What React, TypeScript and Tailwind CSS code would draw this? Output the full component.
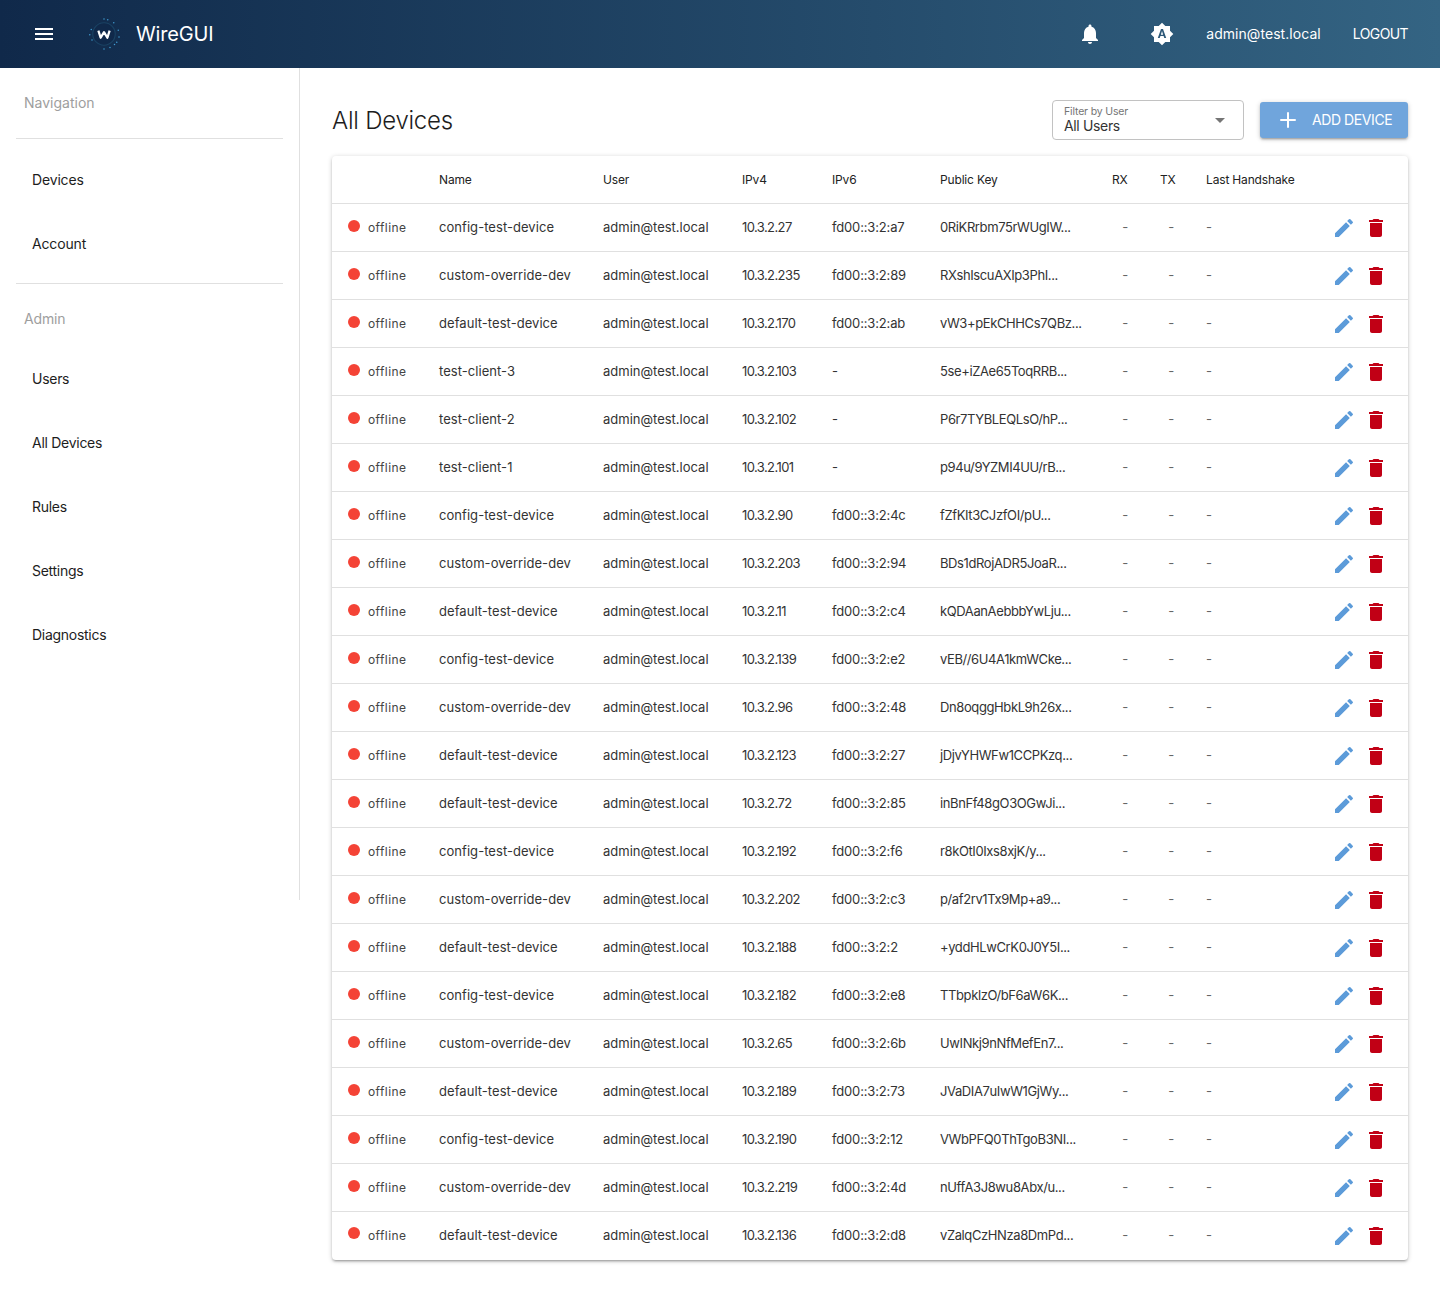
import { Plus } from "lucide-react";

const rows = [
  ["config-test-device", "10.3.2.27", "fd00::3:2:a7", "0RiKRrbm75rWUgIW..."],
  ["custom-override-dev", "10.3.2.235", "fd00::3:2:89", "RXshIscuAXIp3PhI..."],
  ["default-test-device", "10.3.2.170", "fd00::3:2:ab", "vW3+pEkCHHCs7QBz..."],
  ["test-client-3", "10.3.2.103", "-", "5se+iZAe65ToqRRB..."],
  ["test-client-2", "10.3.2.102", "-", "P6r7TYBLEQLsO/hP..."],
  ["test-client-1", "10.3.2.101", "-", "p94u/9YZMI4UU/rB..."],
  ["config-test-device", "10.3.2.90", "fd00::3:2:4c", "fZfKIt3CJzfOI/pU..."],
  ["custom-override-dev", "10.3.2.203", "fd00::3:2:94", "BDs1dRojADR5JoaR..."],
  ["default-test-device", "10.3.2.11", "fd00::3:2:c4", "kQDAanAebbbYwLju..."],
  ["config-test-device", "10.3.2.139", "fd00::3:2:e2", "vEB//6U4A1kmWCke..."],
  ["custom-override-dev", "10.3.2.96", "fd00::3:2:48", "Dn8oqggHbkL9h26x..."],
  ["default-test-device", "10.3.2.123", "fd00::3:2:27", "jDjvYHWFw1CCPKzq..."],
  ["default-test-device", "10.3.2.72", "fd00::3:2:85", "inBnFf48gO3OGwJi..."],
  ["config-test-device", "10.3.2.192", "fd00::3:2:f6", "r8kOtI0Ixs8xjK/y..."],
  ["custom-override-dev", "10.3.2.202", "fd00::3:2:c3", "p/af2rv1Tx9Mp+a9..."],
  ["default-test-device", "10.3.2.188", "fd00::3:2:2", "+yddHLwCrK0J0Y5I..."],
  ["config-test-device", "10.3.2.182", "fd00::3:2:e8", "TTbpklzO/bF6aW6K..."],
  ["custom-override-dev", "10.3.2.65", "fd00::3:2:6b", "UwINkj9nNfMefEn7..."],
  ["default-test-device", "10.3.2.189", "fd00::3:2:73", "JVaDIA7uIwW1GjWy..."],
  ["config-test-device", "10.3.2.190", "fd00::3:2:12", "VWbPFQ0ThTgoB3NI..."],
  ["custom-override-dev", "10.3.2.219", "fd00::3:2:4d", "nUffA3J8wu8Abx/u..."],
  ["default-test-device", "10.3.2.136", "fd00::3:2:d8", "vZalqCzHNza8DmPd..."],
];

const navTop = ["Devices", "Account"];
const navAdmin = ["Users", "All Devices", "Rules", "Settings", "Diagnostics"];

function Logo() {
  const dots = [
    [24, 4], [29, 5], [37, 9], [43, 19], [44, 28], [41, 35], [38, 38], [32, 42], [24, 44], [7, 18], [5, 25], [8, 32],
  ];
  return (
    <svg width="36" height="36" viewBox="0 0 48 48" className="shrink-0">
      <circle cx="24" cy="24" r="15" fill="#10294a" stroke="#1a4263" strokeWidth="1.5" />
      {dots.map(([x, y], i) => (
        <circle key={i} cx={x} cy={y} r="1" fill="#3f9bd1" />
      ))}
      <path d="M16.5 19.5l3 9.5 4.5-7.5 4.5 7.5 3-9.5" fill="none" stroke="#fff" strokeWidth="3" strokeLinejoin="round" />
    </svg>
  );
}

function MenuIcon() {
  return (
    <svg width="24" height="24" viewBox="0 0 24 24" fill="#fff">
      <path d="M3 18h18v-2H3v2zm0-5h18v-2H3v2zm0-7v2h18V6H3z" />
    </svg>
  );
}

function BellIcon() {
  return (
    <svg width="24" height="24" viewBox="0 0 24 24" fill="#fff">
      <path d="M12 22c1.1 0 2-.9 2-2h-4c0 1.1.89 2 2 2zm6-6v-5c0-3.07-1.64-5.64-4.5-6.32V4c0-.83-.67-1.5-1.5-1.5s-1.5.67-1.5 1.5v.68C7.63 5.36 6 7.92 6 11v5l-2 2v1h16v-1l-2-2z" />
    </svg>
  );
}

function ThemeIcon() {
  return (
    <svg width="24" height="24" viewBox="0 0 24 24" fill="#fff">
      <path d="M20 8.69V4h-4.69L12 .69 8.69 4H4v4.69L.69 12 4 15.31V20h4.69L12 23.31 15.31 20H20v-4.69L23.31 12 20 8.69zM14.3 16l-.7-2h-3.2l-.7 2H7.8L11 7h2l3.2 9h-1.9zm-3.45-3.35h2.3L12 9l-1.15 3.65z" />
    </svg>
  );
}

function EditIcon() {
  return (
    <svg width="24" height="24" viewBox="0 0 24 24" fill="#5c9bd9">
      <path d="M3 17.25V21h3.75L17.81 9.94l-3.75-3.75L3 17.25zM20.71 7.04a1 1 0 0 0 0-1.41l-2.34-2.34a1 1 0 0 0-1.41 0l-1.83 1.83 3.75 3.75 1.83-1.83z" />
    </svg>
  );
}

function TrashIcon() {
  return (
    <svg width="24" height="24" viewBox="0 0 24 24" fill="#c10015">
      <path d="M6 19c0 1.1.9 2 2 2h8c1.1 0 2-.9 2-2V7H6v12zM19 4h-3.5l-1-1h-5l-1 1H5v2h14V4z" />
    </svg>
  );
}

export default function App() {
  return (
    <div className="relative min-h-[1292px] bg-white font-['Inter',sans-serif] text-[#1d1d1d] tracking-[-0.01em]">
      <header className="flex h-[68px] items-center bg-gradient-to-r from-[#10294a] to-[#346483] pl-[32px] pr-[32px] text-white">
        <MenuIcon />
        <div className="ml-[30px] flex">
          <Logo />
        </div>
        <span className="ml-[14px] text-[20px] leading-none">WireGUI</span>
        <div className="ml-auto flex items-center">
          <BellIcon />
          <div className="ml-[48px] flex">
            <ThemeIcon />
          </div>
          <span className="ml-[32px] text-sm tracking-[0.004em]">admin@test.local</span>
          <span className="ml-[32px] text-sm tracking-[-0.043em]">LOGOUT</span>
        </div>
      </header>

      <div className="flex items-start">
        <aside className="h-[832px] w-[300px] shrink-0 border-r border-[#e0e0e0] px-[16px]">
          <div className="flex h-[70px] items-center pl-[8px] text-sm tracking-normal text-[#9e9e9e]">Navigation</div>
          <div className="border-t border-[#e0e0e0] pt-[9px] pb-[7px]">
            {navTop.map((n) => (
              <div key={n} className="flex h-[64px] items-center pl-[16px] text-sm">
                {n}
              </div>
            ))}
          </div>
          <div className="flex h-[71px] items-center border-t border-[#e0e0e0] pl-[8px] text-sm text-[#9e9e9e]">Admin</div>
          <div className="-mt-[7px]">
            {navAdmin.map((n) => (
              <div key={n} className="flex h-[64px] items-center pl-[16px] text-sm tracking-[-0.02em]">
                {n}
              </div>
            ))}
          </div>
        </aside>

        <main className="min-w-0 flex-1 px-[32px] pt-[32px]">
          <div className="flex h-[56px] items-start">
            <h1 className="pt-[5px] text-[24px] leading-[32px] font-light tracking-[-0.01em]">All Devices</h1>
            <div className="ml-auto flex h-[40px] w-[192px] items-center justify-between rounded border border-[#c2c2c2] pl-[11px] pr-[18px]">
              <div>
                <div className="text-[10.5px] leading-[12px] text-[#757575]">Filter by User</div>
                <div className="text-sm leading-[16px] tracking-[-0.025em] text-[#333]">All Users</div>
              </div>
              <div className="h-0 w-0 border-x-[5px] border-t-[5px] border-x-transparent border-t-[#757575]" />
            </div>
            <button className="ml-[16px] mt-[2px] flex h-[36px] w-[148px] items-center rounded-[3px] bg-[#70a5dc] pl-[16px] text-sm text-white shadow-[0_1px_5px_rgba(0,0,0,0.2),0_2px_2px_rgba(0,0,0,0.14),0_3px_1px_-2px_rgba(0,0,0,0.12)]">
              <Plus size={24} strokeWidth={2} />
              <span className="ml-[12px] tracking-[-0.03em]">ADD DEVICE</span>
            </button>
          </div>

          <div className="overflow-hidden rounded bg-white shadow-[0_1px_5px_rgba(0,0,0,0.2),0_2px_2px_rgba(0,0,0,0.14),0_3px_1px_-2px_rgba(0,0,0,0.12)]">
            <table className="w-full table-fixed border-collapse text-left text-[13px]">
              <colgroup>
                <col className="w-[91px]" />
                <col className="w-[164px]" />
                <col className="w-[139px]" />
                <col className="w-[90px]" />
                <col className="w-[108px]" />
                <col className="w-[172px]" />
                <col className="w-[48px]" />
                <col className="w-[46px]" />
                <col className="w-[118px]" />
                <col />
              </colgroup>
              <thead>
                <tr className="h-[47px] text-[12px] text-[#222] [&>th]:pt-[2px]">
                  <th className="pl-[16px] font-normal" />
                  <th className="pl-[16px] font-normal">Name</th>
                  <th className="pl-[16px] font-normal">User</th>
                  <th className="pl-[16px] font-normal">IPv4</th>
                  <th className="pl-[16px] font-normal">IPv6</th>
                  <th className="pl-[16px] font-normal">Public Key</th>
                  <th className="pl-[16px] font-normal">RX</th>
                  <th className="pl-[16px] font-normal">TX</th>
                  <th className="whitespace-nowrap pl-[16px] font-normal">Last Handshake</th>
                  <th />
                </tr>
              </thead>
              <tbody className="text-[#333]">
                {rows.map((r, i) => (
                  <tr key={i} className="h-[48px] border-t border-[#e0e0e0] last:h-[49px] last:[&>td]:pb-[2px]">
                    <td className="pl-[16px] pt-[2px]">
                      <div className="flex items-center">
                        <span className="mb-[5px] h-[12px] w-[12px] rounded-full bg-[#f44336]" />
                        <span className="ml-[8px] text-[12px] tracking-[0.035em] text-[#444]">offline</span>
                      </div>
                    </td>
                    <td className="whitespace-nowrap pl-[16px] pt-[2px] tracking-[0.004em]">{r[0]}</td>
                    <td className="whitespace-nowrap pl-[16px] pt-[2px] tracking-normal">admin@test.local</td>
                    <td className="whitespace-nowrap pl-[16px] pt-[2px] tracking-[-0.045em]">{r[1]}</td>
                    <td className="whitespace-nowrap pl-[16px] pt-[2px]">{r[2]}</td>
                    <td className="whitespace-nowrap pl-[16px] pt-[2px] tracking-[-0.03em]">{r[3]}</td>
                    <td className="pr-[16px] pt-[2px] text-right text-[#666]">-</td>
                    <td className="pr-[16px] pt-[2px] text-right text-[#666]">-</td>
                    <td className="pl-[16px] pt-[2px] text-[#666]">-</td>
                    <td className="pt-[2px]">
                      <div className="flex items-center justify-end gap-[8px] pr-[20px]">
                        <EditIcon />
                        <TrashIcon />
                      </div>
                    </td>
                  </tr>
                ))}
              </tbody>
            </table>
          </div>
        </main>
      </div>
    </div>
  );
}
